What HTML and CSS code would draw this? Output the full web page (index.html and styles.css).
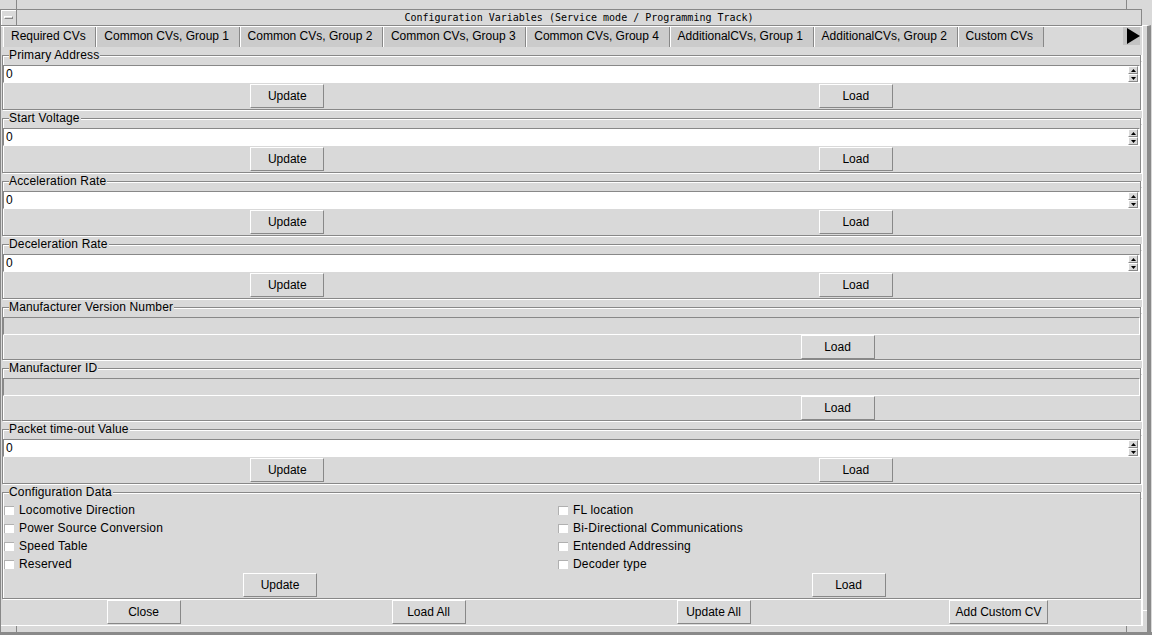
FILE: index.html
```html
<!DOCTYPE html>
<html lang="en">
<head>
<meta charset="utf-8">
<title>Configuration Variables</title>
<link rel="stylesheet" href="styles.css">
</head>
<body>
<div class="frame">
  <div class="wm-strip wm-top">
    <div class="wm-corner"></div><div class="wm-edge"></div><div class="wm-rest"></div>
  </div>
  <div class="middle">
    <div class="main">
      <div class="titlebar">
        <div class="menu-btn"><span class="dash"></span></div>
        <div class="title">Configuration Variables (Service mode / Programming Track)</div>
      </div>
      <div class="tabs">
        <div class="tab selected">Required CVs</div>
        <div class="tab">Common CVs, Group 1</div>
        <div class="tab">Common CVs, Group 2</div>
        <div class="tab">Common CVs, Group 3</div>
        <div class="tab">Common CVs, Group 4</div>
        <div class="tab">AdditionalCVs, Group 1</div>
        <div class="tab">AdditionalCVs, Group 2</div>
        <div class="tab">Custom CVs</div>
        <div class="tab-scroll"><svg width="13" height="16" viewBox="0 0 13 16"><path d="M0 0 L13 8 L0 16 Z" fill="#000"/></svg></div>
      </div>
      <div class="groups">
        <section class="group">
          <div class="ghead"><span class="gl"></span><span class="gtitle">Primary Address</span><span class="gr"></span></div>
          <div class="gbody">
            <div class="field"><span class="val">0</span><span class="spin"><span class="spin-btn"><svg width="5" height="3" viewBox="0 0 5 3"><path d="M0 3 L2.5 0 L5 3 Z" fill="#000"/></svg></span><span class="spin-btn"><svg width="5" height="3" viewBox="0 0 5 3"><path d="M0 0 L5 0 L2.5 3 Z" fill="#000"/></svg></span></span></div>
            <div class="btnrow halves"><button class="btn">Update</button><button class="btn">Load</button></div>
          </div>
        </section>
        <section class="group">
          <div class="ghead"><span class="gl"></span><span class="gtitle">Start Voltage</span><span class="gr"></span></div>
          <div class="gbody">
            <div class="field"><span class="val">0</span><span class="spin"><span class="spin-btn"><svg width="5" height="3" viewBox="0 0 5 3"><path d="M0 3 L2.5 0 L5 3 Z" fill="#000"/></svg></span><span class="spin-btn"><svg width="5" height="3" viewBox="0 0 5 3"><path d="M0 0 L5 0 L2.5 3 Z" fill="#000"/></svg></span></span></div>
            <div class="btnrow halves"><button class="btn">Update</button><button class="btn">Load</button></div>
          </div>
        </section>
        <section class="group">
          <div class="ghead"><span class="gl"></span><span class="gtitle">Acceleration Rate</span><span class="gr"></span></div>
          <div class="gbody">
            <div class="field"><span class="val">0</span><span class="spin"><span class="spin-btn"><svg width="5" height="3" viewBox="0 0 5 3"><path d="M0 3 L2.5 0 L5 3 Z" fill="#000"/></svg></span><span class="spin-btn"><svg width="5" height="3" viewBox="0 0 5 3"><path d="M0 0 L5 0 L2.5 3 Z" fill="#000"/></svg></span></span></div>
            <div class="btnrow halves"><button class="btn">Update</button><button class="btn">Load</button></div>
          </div>
        </section>
        <section class="group">
          <div class="ghead"><span class="gl"></span><span class="gtitle">Deceleration Rate</span><span class="gr"></span></div>
          <div class="gbody">
            <div class="field"><span class="val">0</span><span class="spin"><span class="spin-btn"><svg width="5" height="3" viewBox="0 0 5 3"><path d="M0 3 L2.5 0 L5 3 Z" fill="#000"/></svg></span><span class="spin-btn"><svg width="5" height="3" viewBox="0 0 5 3"><path d="M0 0 L5 0 L2.5 3 Z" fill="#000"/></svg></span></span></div>
            <div class="btnrow halves"><button class="btn">Update</button><button class="btn">Load</button></div>
          </div>
        </section>
        <section class="group">
          <div class="ghead"><span class="gl"></span><span class="gtitle">Manufacturer Version Number</span><span class="gr"></span></div>
          <div class="gbody readonly">
            <div class="field ro"></div>
            <div class="btnrow right"><span></span><button class="btn">Load</button></div>
          </div>
        </section>
        <section class="group">
          <div class="ghead"><span class="gl"></span><span class="gtitle">Manufacturer ID</span><span class="gr"></span></div>
          <div class="gbody readonly">
            <div class="field ro"></div>
            <div class="btnrow right"><span></span><button class="btn">Load</button></div>
          </div>
        </section>
        <section class="group">
          <div class="ghead"><span class="gl"></span><span class="gtitle">Packet time-out Value</span><span class="gr"></span></div>
          <div class="gbody">
            <div class="field"><span class="val">0</span><span class="spin"><span class="spin-btn"><svg width="5" height="3" viewBox="0 0 5 3"><path d="M0 3 L2.5 0 L5 3 Z" fill="#000"/></svg></span><span class="spin-btn"><svg width="5" height="3" viewBox="0 0 5 3"><path d="M0 0 L5 0 L2.5 3 Z" fill="#000"/></svg></span></span></div>
            <div class="btnrow halves"><button class="btn">Update</button><button class="btn">Load</button></div>
          </div>
        </section>
        <section class="group">
          <div class="ghead"><span class="gl"></span><span class="gtitle">Configuration Data</span><span class="gr"></span></div>
          <div class="gbody cfgbody">
            <div class="cfg">
              <div class="checks">
                <div class="check"><span class="box"></span><span class="lbl">Locomotive Direction</span></div>
                <div class="check"><span class="box"></span><span class="lbl">Power Source Conversion</span></div>
                <div class="check"><span class="box"></span><span class="lbl">Speed Table</span></div>
                <div class="check"><span class="box"></span><span class="lbl">Reserved</span></div>
              </div>
              <div class="checks">
                <div class="check"><span class="box"></span><span class="lbl">FL location</span></div>
                <div class="check"><span class="box"></span><span class="lbl">Bi-Directional Communications</span></div>
                <div class="check"><span class="box"></span><span class="lbl">Entended Addressing</span></div>
                <div class="check"><span class="box"></span><span class="lbl">Decoder type</span></div>
              </div>
              <div class="cell"><button class="btn">Update</button></div>
              <div class="cell"><button class="btn">Load</button></div>
            </div>
          </div>
        </section>
      </div>
      <div class="bottombar">
        <button class="btn">Close</button>
        <button class="btn">Load All</button>
        <button class="btn">Update All</button>
        <button class="btn">Add Custom CV</button>
      </div>
    </div>
    <div class="side"><div class="side-top"></div><div class="side-bot"></div></div>
  </div>
  <div class="wm-strip wm-bottom">
    <div class="wm-corner"></div><div class="wm-edge"></div><div class="wm-rest"></div>
  </div>
</div>
</body>
</html>
```
FILE: styles.css
```css
* { box-sizing: border-box; }
html, body { margin: 0; padding: 0; }
body {
  background: #d9d9d9;
  font-family: "Liberation Sans", Arial, sans-serif;
  font-size: 12px;
  color: #000;
  width: 1152px;
  height: 635px;
  overflow: hidden;
}
.frame { display: flex; flex-direction: column; width: 1152px; height: 635px; }

/* window manager strips */
.wm-strip { display: flex; height: 9px; flex: none; }
.wm-top .wm-corner { width: 17px; border-right: 1px solid #888; }
.wm-top .wm-edge { width: 1110px; border-right: 1px solid #888; }
.wm-rest { flex: 1; }
.wm-bottom { border-left: 1px solid #888; border-bottom: 3px solid #8a8a8a; }
.wm-bottom .wm-corner { width: 16px; border-right: 1px solid #888; }
.wm-bottom .wm-edge { width: 1110px; border-right: 1px solid #888; }
.wm-bottom .wm-rest { border-right: 4px solid #8a8a8a; margin-right: 1px; }

.middle { display: flex; flex: 1; min-height: 0; }
.main {
  width: 1142px;
  flex: none;
  display: flex;
  flex-direction: column;
  border-left: 1px solid #888;
}
.side {
  width: 9px;
  margin-top: 16px;
  margin-right: 1px;
  border-top: 1px solid #fff;
  border-left: 1px solid #fff;
  border-right: 4px solid #8a8a8a;
  display: flex;
  flex-direction: column;
}
.side-top { flex: 1; }
.side-bot { height: 16px; border-top: 1px solid #fff; }

/* title bar */
.titlebar {
  height: 17px;
  flex: none;
  display: flex;
  border-top: 1px solid #888;
  border-bottom: 1px solid #888;
  border-right: 1px solid #888;
  box-shadow: 0 1px 0 #fff;
}
.menu-btn {
  width: 16px;
  border-right: 1px solid #888;
  box-shadow: inset 1px 1px 0 #fff;
  display: flex;
  align-items: center;
  justify-content: center;
}
.dash {
  width: 9px;
  height: 3px;
  border: 1px solid;
  border-color: #fff #888 #888 #fff;
}
.title {
  flex: 1;
  text-align: center;
  font-family: "DejaVu Sans Mono", "Liberation Mono", monospace;
  font-size: 10px;
  line-height: 15px;
  white-space: nowrap;
}

/* tabs */
.tabs {
  height: 21px;
  flex: none;
  display: flex;
  align-items: flex-start;
  padding: 1px 2px 0 2px;
}
.tab {
  height: 20px;
  padding: 0 9.6px 0 7px;
  border-left: 1px solid #fff;
  border-right: 1px solid #888;
  background: #cbcbcb;
  line-height: 19px;
  white-space: nowrap;
}
.tab.selected { background: #d0d0d0; }
.tab-scroll {
  margin-left: auto;
  width: 17px;
  height: 18px;
  background: #c3c3c3;
  display: flex;
  align-items: center;
  justify-content: flex-end;
}
.tab-scroll svg { display: block; }

/* groups */
.groups {
  display: flex;
  flex-direction: column;
  padding: 2px 1px 0 1px;
  flex: none;
}
.group { display: flex; flex-direction: column; margin-bottom: 2px; }
.group:last-child { margin-bottom: 0; }
.ghead { display: flex; height: 12px; flex: none; }
.gl {
  width: 7px;
  margin-top: 6px;
  border-top: 1px solid #888;
  border-left: 1px solid #888;
  box-shadow: inset 1px 1px 0 #fff;
}
.gtitle { line-height: 12px; white-space: nowrap; padding-right: 1px; letter-spacing: 0.15px; }
.gr {
  flex: 1;
  margin-top: 6px;
  border-top: 1px solid #888;
  border-right: 1px solid #888;
  box-shadow: inset 0 1px 0 #fff, 1px 0 0 #fff;
}
.gbody {
  border: 1px solid #888;
  border-top: 0;
  box-shadow: 1px 1px 0 #fff, inset 1px 0 0 #fff;
  padding: 4px 0 1px 0;
  display: flex;
  flex-direction: column;
  gap: 1px;
}
.gbody.readonly { padding-bottom: 0; gap: 0; }
.gbody.cfgbody { padding: 3px 0 1px 0; }

.field {
  height: 18px;
  display: flex;
  align-items: center;
  background: #fff;
  border: 1px solid;
  border-color: #888 #fff #fff #888;
}
.field.ro { background: #d9d9d9; }
.val { flex: 1; padding-left: 2px; line-height: 16px; }
.spin {
  width: 10px;
  height: 16px;
  margin-right: 1px;
  display: flex;
  flex-direction: column;
}
.spin-btn {
  flex: 1;
  background: #d9d9d9;
  border: 1px solid;
  border-color: #fff #888 #888 #fff;
  display: flex;
  align-items: center;
  justify-content: center;
}
.spin-btn svg { display: block; }

.btnrow { display: grid; height: 24px; justify-items: center; }
.btnrow.halves { grid-template-columns: 1fr 1fr; }
.btnrow.right { grid-template-columns: 1fr 605px; }

.btn {
  font-family: "Liberation Sans", Arial, sans-serif;
  font-size: 12px;
  color: #000;
  background: #d9d9d9;
  border: 1px solid;
  border-color: #fff #888 #888 #fff;
  border-radius: 0;
  min-width: 74px;
  height: 24px;
  padding: 0 5px;
  margin: 0;
  white-space: nowrap;
}

/* configuration data */
.cfg { display: grid; grid-template-columns: 554px 1fr; }
.checks { display: flex; flex-direction: column; padding-left: 1px; }
.check { height: 18px; display: flex; align-items: center; gap: 5px; white-space: nowrap; }
.lbl { letter-spacing: 0.2px; }
.box {
  width: 10px;
  height: 9px;
  background: #fff;
  border-top: 1px solid #b0b0b0;
  border-left: 1px solid #b0b0b0;
}
.cell { display: flex; justify-content: center; }

/* bottom bar */
.bottombar {
  height: 27px;
  flex: none;
  display: grid;
  grid-template-columns: repeat(4, 1fr);
  justify-items: center;
  padding: 1px 0;
  border-bottom: 1px solid #fff;
  border-right: 1px solid #fff;
}
```
